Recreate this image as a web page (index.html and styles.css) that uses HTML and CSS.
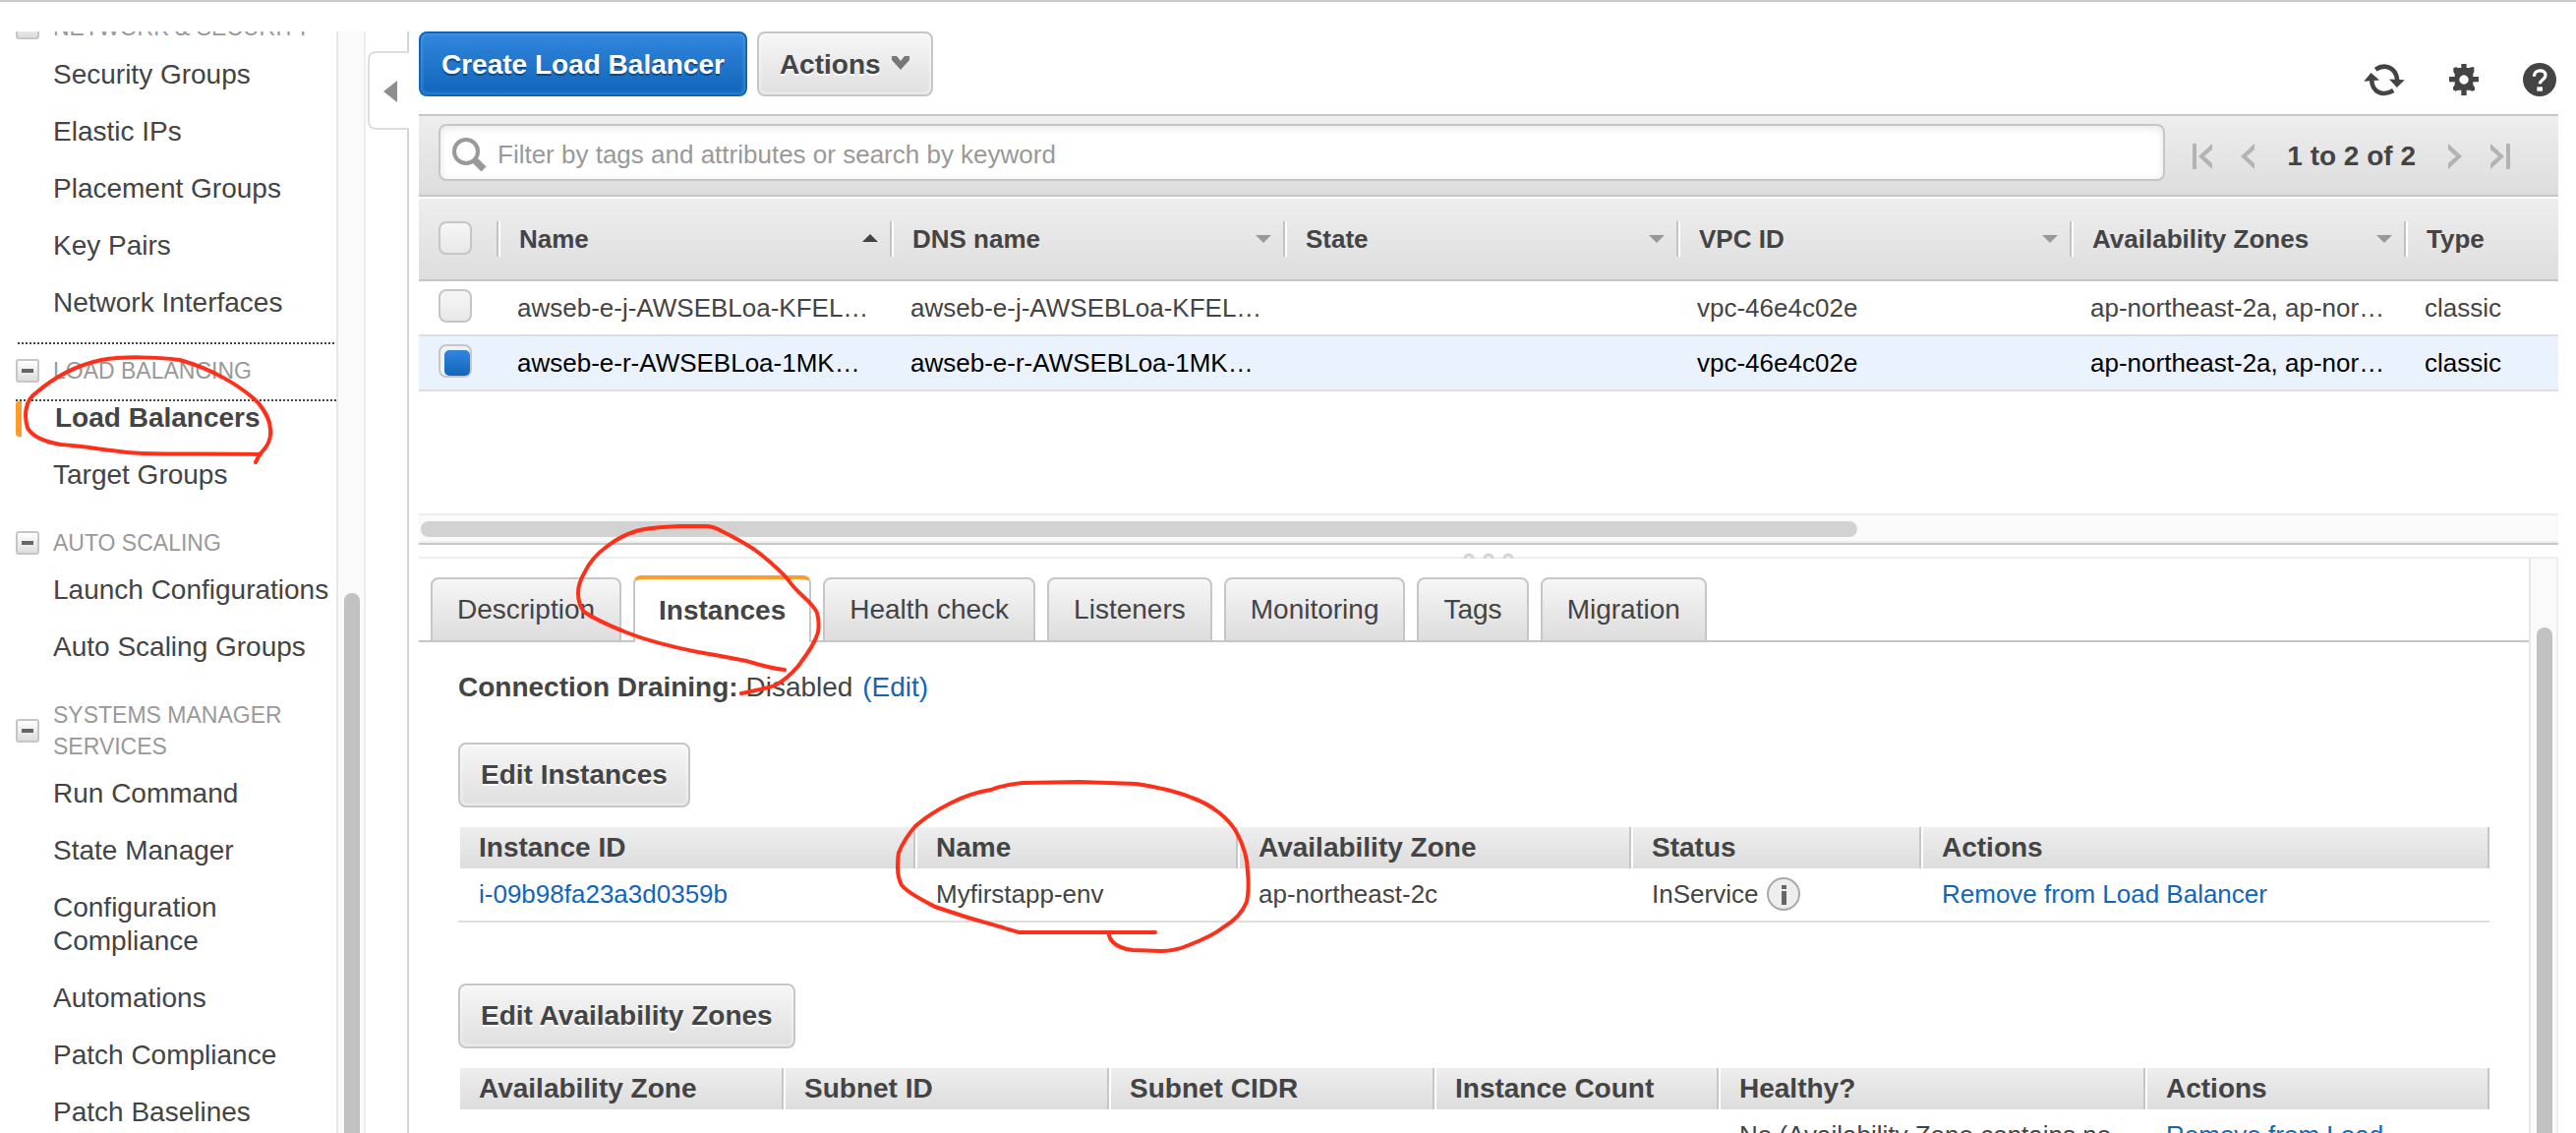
FILE: index.html
```html
<!DOCTYPE html>
<html lang="en">
<head>
<meta charset="utf-8">
<title>Load Balancers</title>
<link rel="stylesheet" href="styles.css">
</head>
<body>
<div class="app">
  <aside class="sidebar">
    <nav class="nav">
      <section class="group group-first">
        <h2 class="heading"><button class="fold" aria-label="Collapse"></button>NETWORK &amp; SECURITY</h2>
        <ul>
          <li><a href="#">Security Groups</a></li>
          <li><a href="#">Elastic IPs</a></li>
          <li><a href="#">Placement Groups</a></li>
          <li><a href="#">Key Pairs</a></li>
          <li><a href="#">Network Interfaces</a></li>
        </ul>
      </section>
      <section class="group group-open">
        <h2 class="heading"><button class="fold" aria-label="Collapse"></button>LOAD BALANCING</h2>
        <ul>
          <li class="current"><a href="#">Load Balancers</a></li>
          <li><a href="#">Target Groups</a></li>
        </ul>
      </section>
      <section class="group">
        <h2 class="heading"><button class="fold" aria-label="Collapse"></button>AUTO SCALING</h2>
        <ul>
          <li><a href="#">Launch Configurations</a></li>
          <li><a href="#">Auto Scaling Groups</a></li>
        </ul>
      </section>
      <section class="group">
        <h2 class="heading"><button class="fold" aria-label="Collapse"></button>SYSTEMS MANAGER SERVICES</h2>
        <ul>
          <li><a href="#">Run Command</a></li>
          <li><a href="#">State Manager</a></li>
          <li><a href="#">Configuration Compliance</a></li>
          <li><a href="#">Automations</a></li>
          <li><a href="#">Patch Compliance</a></li>
          <li><a href="#">Patch Baselines</a></li>
        </ul>
      </section>
    </nav>
    <div class="vscroll"><div class="vthumb nav-thumb"></div></div>
  </aside>

  <div class="gutter">
    <div class="gutter-top"></div>
    <button class="collapse" aria-label="Hide navigation"><svg width="14" height="22" viewBox="0 0 14 22"><path d="M14 0v22L0 11z" fill="#8e8e8e"/></svg></button>
    <div class="gutter-rest"></div>
  </div>

  <main class="main">
    <div class="toolbar">
      <button class="btn btn-primary">Create Load Balancer</button>
      <button class="btn">Actions <svg width="20" height="16" viewBox="0 0 20 16"><path d="M1 1h5l4 5 4-5h5v4l-9 10L1 5z" fill="#777"/></svg></button>
      <div class="tools">
        <button class="tool" aria-label="Refresh"><svg width="42" height="33" viewBox="40 50 126 100"><g fill="none" stroke="#444" stroke-width="14"><path d="M76 67C106 47 140 62 143 100"/><path d="M131 132C99 151 66 138 64 100"/></g><path d="M62 77L88 100 40 104zM118 97l48 2-24 24z" fill="#444"/></svg></button>
        <button class="tool" aria-label="Settings"><svg width="30" height="32" viewBox="300 42 90 96"><path fill="#444" fill-rule="evenodd" d="M337 42h16v12h10l3-2h10v14l-3 6v9h17v16h-17v9l5 8v8l-8 3-7-3h-10v16h-16v-16h-10l-7 3-8-4v-8l5-7v-9h-17V81h17v-9l-4-6V54l8-2 6 2h10zM345 76a14 14 0 1 0 .1 0z"/></svg></button>
        <button class="tool" aria-label="Help"><svg width="34" height="34" viewBox="528 41 102 102"><circle cx="579" cy="92" r="51" fill="#444"/><path d="M562 82c0-24 37-22 35-3-1 13-17 13-17 26" fill="none" stroke="#fff" stroke-width="10"/><path d="M571 114h17v13h-17z" fill="#fff"/></svg></button>
      </div>
    </div>

    <div class="filterbar">
      <div class="search">
        <svg class="lens" width="36" height="36" viewBox="0 0 36 36"><g fill="none" stroke="#999"><circle cx="14" cy="15" r="12" stroke-width="4"/><path d="M23 24l9 9" stroke-width="7"/></g></svg>
        <input type="text" aria-label="Filter" placeholder="Filter by tags and attributes or search by keyword">
      </div>
      <div class="pager">
        <button aria-label="First page"><svg width="20" height="26" viewBox="0 0 20 26" fill="#b3b3b3"><path d="M0 0h4v26H0zM20 0v6l-8 7 8 7v6L6 13z"/></svg></button>
        <button class="prev" aria-label="Previous page"><svg width="14" height="26" viewBox="0 0 14 26" fill="#b3b3b3"><path d="M14 0v6l-8 7 8 7v6L0 13z"/></svg></button>
        <span>1 to 2 of 2</span>
        <button class="next" aria-label="Next page"><svg width="14" height="26" viewBox="0 0 14 26" fill="#b3b3b3"><path d="M0 0v6l8 7-8 7v6l14-13z"/></svg></button>
        <button aria-label="Last page"><svg width="20" height="26" viewBox="0 0 20 26" fill="#b3b3b3"><path d="M16 0h4v26h-4zM0 0v6l8 7-8 7v6l14-13z"/></svg></button>
      </div>
    </div>

    <div class="list">
      <table class="balancers">
        <colgroup><col class="c-check"><col class="c-wide"><col class="c-wide"><col class="c-wide"><col class="c-wide"><col class="c-zones"><col></colgroup>
        <thead>
          <tr>
            <th class="check"><input type="checkbox" aria-label="Select all"></th>
            <th><div class="head">Name<svg class="up" width="16" height="8" viewBox="0 0 16 8"><path d="M8 0l8 8H0z" fill="#444"/></svg></div></th>
            <th><div class="head">DNS name<svg width="16" height="8" viewBox="0 0 16 8"><path d="M0 0h16L8 8z" fill="#999"/></svg></div></th>
            <th><div class="head">State<svg width="16" height="8" viewBox="0 0 16 8"><path d="M0 0h16L8 8z" fill="#999"/></svg></div></th>
            <th><div class="head">VPC ID<svg width="16" height="8" viewBox="0 0 16 8"><path d="M0 0h16L8 8z" fill="#999"/></svg></div></th>
            <th><div class="head">Availability Zones<svg width="16" height="8" viewBox="0 0 16 8"><path d="M0 0h16L8 8z" fill="#999"/></svg></div></th>
            <th><div class="head">Type</div></th>
          </tr>
        </thead>
        <tbody>
          <tr>
            <td class="check"><input type="checkbox" aria-label="Select row 1"></td>
            <td>awseb-e-j-AWSEBLoa-KFEL…</td><td>awseb-e-j-AWSEBLoa-KFEL…</td><td></td><td>vpc-46e4c02e</td><td>ap-northeast-2a, ap-nor…</td><td>classic</td>
          </tr>
          <tr class="selected">
            <td class="check"><input type="checkbox" aria-label="Select row 2" checked></td>
            <td>awseb-e-r-AWSEBLoa-1MK…</td><td>awseb-e-r-AWSEBLoa-1MK…</td><td></td><td>vpc-46e4c02e</td><td>ap-northeast-2a, ap-nor…</td><td>classic</td>
          </tr>
        </tbody>
      </table>
    </div>
    <div class="hscroll"><div class="hthumb"></div></div>
    <div class="splitter"><svg width="52" height="6" viewBox="0 0 52 6"><g fill="none" stroke="#d4d4d4" stroke-width="3"><circle cx="6" cy="6" r="4"/><circle cx="26" cy="6" r="4"/><circle cx="46" cy="6" r="4"/></g></svg></div>

    <div class="detail">
      <div class="pane">
        <div class="tabs" role="tablist">
          <button class="tab" role="tab">Description</button>
          <button class="tab tab-active" role="tab" aria-selected="true">Instances</button>
          <button class="tab" role="tab">Health check</button>
          <button class="tab" role="tab">Listeners</button>
          <button class="tab" role="tab">Monitoring</button>
          <button class="tab" role="tab">Tags</button>
          <button class="tab" role="tab">Migration</button>
        </div>
        <div class="content">
          <p class="draining"><strong>Connection Draining:</strong> Disabled <a href="#">(Edit)</a></p>
          <button class="btn">Edit Instances</button>
          <table class="grid">
            <colgroup><col class="i-id"><col class="i-name"><col class="i-zone"><col class="i-status"><col></colgroup>
            <thead><tr><th>Instance ID</th><th>Name</th><th>Availability Zone</th><th>Status</th><th>Actions</th></tr></thead>
            <tbody><tr>
              <td><a href="#">i-09b98fa23a3d0359b</a></td><td>Myfirstapp-env</td><td>ap-northeast-2c</td>
              <td><span class="status">InService <svg width="34" height="34" viewBox="0 0 34 34"><circle cx="17" cy="17" r="16" fill="#eee" stroke="#aaa" stroke-width="2"/><path d="M15 14h5v14h-5zM15 8h5v4h-5z" fill="#666"/></svg></span></td>
              <td><a href="#">Remove from Load Balancer</a></td>
            </tr></tbody>
          </table>
          <button class="btn btn-zones">Edit Availability Zones</button>
          <table class="grid">
            <colgroup><col class="z-wide"><col class="z-wide"><col class="z-wide"><col class="z-count"><col class="z-health"><col></colgroup>
            <thead><tr><th>Availability Zone</th><th>Subnet ID</th><th>Subnet CIDR</th><th>Instance Count</th><th>Healthy?</th><th>Actions</th></tr></thead>
            <tbody><tr><td></td><td></td><td></td><td></td><td>No (Availability Zone contains no</td><td><a href="#">Remove from Load</a></td></tr></tbody>
          </table>
        </div>
      </div>
      <div class="vscroll"><div class="vthumb detail-thumb"></div></div>
    </div>
  </main>
</div>

<!-- hand-drawn marks around the navigation item, the tab and the name column -->
<svg class="marks" width="2620" height="1152" viewBox="0 0 2620 1152" aria-hidden="true">
  <g fill="none" stroke="#ff2f1a" stroke-width="4" stroke-linecap="round" stroke-linejoin="round">
    <path d="M260 470L264 462C272 454 276 447 275 437C275 427 270 419 263 410C245 392 215 375 183 366C160 363 125 362 103 366C75 372 52 386 36 400C26 407 24 422 28 435C34 446 50 450 62 452C90 454 120 460 145 461C185 462 225 461 265 462"/>
    <path d="M754 705C768 702 780 700 788 697C798 692 806 684 812 677C820 666 828 656 832 643C833 636 833 630 831 623C825 610 812 605 802 590C794 580 784 572 773 563C760 553 746 546 734 540C729 537 723 535 717 535L691 535C675 536 660 536 647 540C634 544 626 549 618 555C607 563 599 572 594 583C590 590 588 597 588 603C588 611 590 617 594 622C607 631 622 637 637 643C660 652 685 658 710 663C728 666 744 669 759 672C772 676 785 680 798 681"/>
    <path d="M1175 948L1037 948C1030 946 1025 945 1020 943C997 937 974 930 951 922C936 914 924 908 917 900C914 894 913 889 913 883C913 877 913 872 914 867C918 857 924 848 931 840C941 831 954 823 968 816C980 810 995 805 1008 803C1018 799 1029 797 1040 796L1098 795L1156 797C1175 800 1195 804 1212 811C1232 818 1250 832 1258 847C1265 860 1269 873 1269 887C1270 897 1270 908 1268 917C1264 927 1256 936 1244 943C1234 951 1222 956 1209 961C1200 965 1191 967 1181 967L1152 966C1143 965 1136 962 1132 958C1129 955 1128 953 1128 950"/>
  </g>
</svg>
</body>
</html>
```
FILE: styles.css
```css
* { box-sizing: border-box; }

body {
  margin: 0;
  height: 100vh;
  overflow: hidden;
  position: relative;
  border-top: 2px solid #ccc;
  padding-top: 30px;
  background: #fff;
  color: #444;
  font-family: "Liberation Sans", Arial, sans-serif;
  font-size: 28px;
  line-height: 34px;
}

a { color: #1166bb; text-decoration: none; }
button { font: inherit; color: inherit; cursor: pointer; }
svg { display: block; flex: none; }
ul { list-style: none; margin: 0; padding: 0; }

.app { display: flex; height: 100%; }

/* sidebar */
.sidebar { display: flex; flex: none; width: 372px; overflow: hidden; }
.nav { flex: 1; min-width: 0; }
.heading {
  display: flex;
  align-items: center;
  gap: 14px;
  margin: 0 0 3px;
  padding: 24px 0 0 16px;
  color: #999;
  font-size: 23px;
  font-weight: normal;
  line-height: 32px;
}
.group-first { margin-top: -20px; }
.group-first .heading { padding-top: 0; }
.group-open .heading {
  margin: 11px 2px 0 18px;
  padding: 11px 0 0;
  gap: 12px;
  border-top: 2px dotted #444;
}
.fold {
  flex: none;
  display: flex;
  align-items: center;
  justify-content: center;
  width: 24px;
  height: 24px;
  padding: 0;
  border: 2px solid #c6c6c6;
  border-radius: 3px;
  background: linear-gradient(#fff, #ddd);
}
.group-open .fold { margin-left: -2px; margin-right: 2px; }
.fold::before { content: ""; width: 12px; height: 4px; background: #666; }
.nav li { padding: 12px 0 12px 54px; }
.nav a { display: block; color: #444; }
.nav .current {
  position: relative;
  margin: 13px 0 0 16px;
  padding: 0 0 12px 40px;
  border-top: 2px dotted #444;
  font-weight: bold;
}
.current::before {
  content: "";
  position: absolute;
  left: 0;
  top: 0;
  width: 6px;
  height: 36px;
  border-radius: 3px 0 0 3px;
  background: #ff9d2b;
}

.vscroll {
  flex: none;
  width: 30px;
  padding: 0 6px;
  border-left: 2px solid #e7e7e7;
  border-right: 2px solid #ededed;
  background: #fafafa;
  overflow: hidden;
}
.vthumb { width: 16px; height: 100%; border-radius: 8px; background: #c2c2c2; }
.nav-thumb { margin-top: 571px; }
.detail-thumb { margin-top: 70px; }

/* strip between sidebar and main */
.gutter { display: flex; flex-direction: column; flex: none; width: 44px; }
.gutter-top { height: 20px; border-right: 2px solid #d5d5d5; }
.collapse {
  display: flex;
  align-items: center;
  justify-content: flex-end;
  height: 80px;
  margin-left: 2px;
  padding: 2px 12px 0 0;
  border: 2px solid #ddd;
  border-right: 0;
  border-radius: 8px 0 0 8px;
  background: #fff;
}
.gutter-rest { flex: 1; border-right: 2px solid #d5d5d5; }

/* main */
.main { display: flex; flex-direction: column; flex: 1; min-width: 0; margin: 0 18px 0 10px; }
.toolbar { display: flex; gap: 10px; flex: none; padding-bottom: 18px; }
.btn {
  display: inline-flex;
  align-items: center;
  gap: 10px;
  height: 66px;
  padding: 0 21px;
  border: 2px solid #c6c6c6;
  border-radius: 8px;
  background: linear-gradient(#f6f6f6, #dfdfdf);
  box-shadow: inset 0 0 4px #fff;
  font-weight: bold;
  text-shadow: 0 2px 0 #fff;
}
.toolbar .btn { padding-top: 2px; }
.btn svg { margin-bottom: 4px; }
.btn-primary {
  border-color: #1166bb;
  background: linear-gradient(#3186dd, #1166bb);
  box-shadow: inset 0 0 4px #5ca3ea;
  color: #fff;
  text-shadow: 0 2px 1px #0a4a8c;
}
.tools { display: flex; align-items: center; gap: 45px; margin-left: auto; padding: 32px 2px 0 0; }
.tool { padding: 0; border: 0; background: none; }

.filterbar {
  display: flex;
  flex: none;
  gap: 28px;
  padding: 8px 49px 14px 20px;
  border: solid #c6c6c6;
  border-width: 2px 0;
  background: linear-gradient(#eee, #ddd);
}
.search {
  display: flex;
  align-items: center;
  flex: 1;
  height: 58px;
  padding: 4px 12px 0;
  gap: 10px;
  border: 2px solid #c6c6c6;
  border-radius: 8px;
  background: #fff;
  box-shadow: inset 0 2px 8px #e6e6e6;
}
.search input {
  flex: 1;
  min-width: 0;
  padding: 0;
  border: 0;
  outline: 0;
  background: none;
  color: #444;
  font: inherit;
  font-size: 26px;
}
.search input::placeholder { color: #999; opacity: 1; }
.pager { display: flex; align-items: center; gap: 29px; padding-top: 8px; font-weight: bold; }
.pager button { padding: 0; border: 0; background: none; }
.pager .prev { margin-right: 4px; }
.pager .next { margin-left: 4px; }

.list { flex: none; min-height: 322px; padding-top: 2px; font-size: 26px; }
table { width: 100%; table-layout: fixed; border-collapse: separate; border-spacing: 0; }
th { text-align: left; }
td, th { padding: 0; }
.balancers thead { background: linear-gradient(#eee, #ddd); }
.balancers th { height: 84px; border-bottom: 2px solid #c6c6c6; }
.balancers td { height: 56px; padding: 0 0 0 21px; border-bottom: 2px solid #dedede; white-space: nowrap; }
.selected { background: #eaf2fe; color: #000; }
.head {
  display: flex;
  align-items: center;
  justify-content: space-between;
  height: 36px;
  padding: 0 12px 0 21px;
  border-left: 2px solid #c2c2c2;
  box-shadow: inset 2px 0 #fff;
}
.head .up { margin-bottom: 2px; }
.balancers .check { padding: 0 0 0 20px; }
.balancers th.check { padding-bottom: 3px; }
.balancers td.check { padding-top: 8px; vertical-align: top; }
.check input {
  appearance: none;
  display: block;
  width: 34px;
  height: 34px;
  margin: 0;
  border: 2px solid #c6c6c6;
  border-radius: 8px;
  background: linear-gradient(#f6f6f6, #e8e8e8);
}
.check input:checked {
  display: flex;
  padding: 4px 0 0 4px;
  background: #f2f2f2;
}
.check input:checked::before {
  content: "";
  flex: 1;
  border-radius: 5px;
  background: linear-gradient(#3186dd, #1166bb);
}
.c-check { width: 79px; }
.c-wide { width: 400px; }
.c-zones { width: 340px; }

.hscroll {
  flex: none;
  height: 32px;
  padding: 6px 2px;
  border-top: 2px solid #ececec;
  border-bottom: 2px solid #c8c8c8;
  background: #fafafa;
  box-shadow: inset 0 -2px #eee;
}
.hthumb { width: calc(67% + 6px); height: 16px; border-radius: 8px; background: #d2d2d2; }
.splitter {
  display: flex;
  flex: none;
  align-items: flex-end;
  justify-content: center;
  height: 14px;
  border-bottom: 2px solid #eee;
}
.splitter svg { margin-bottom: -2px; }

/* detail pane */
.detail { display: flex; flex: 1; min-height: 0; overflow: hidden; }
.pane { flex: 1; min-width: 0; }
.tabs {
  display: flex;
  align-items: flex-end;
  gap: 12px;
  padding: 17px 12px 0;
  box-shadow: inset 0 -2px #c6c6c6;
}
.tab {
  height: 66px;
  padding: 0 25px;
  border: 2px solid #c6c6c6;
  border-radius: 8px 8px 0 0;
  background: linear-gradient(#f6f6f6, #ddd);
}
.tab-active {
  height: 68px;
  padding: 0 24px;
  border-top: 4px solid #ff9d2b;
  border-bottom: 0;
  background: #fff;
  font-weight: bold;
}
.content { padding: 29px 40px 0; }
.draining { margin: 0 0 39px; }
.draining a { margin-left: 2px; }
.btn-zones { margin-top: 62px; }
.grid { margin-top: 20px; }
.grid th {
  height: 42px;
  padding-left: 19px;
  border-left: 2px solid #fff;
  border-right: 2px solid #c6c6c6;
  background: linear-gradient(#eee, #ddd);
  background-clip: padding-box;
}
.grid td {
  height: 55px;
  padding: 10px 0 11px 21px;
  border-bottom: 2px solid #dedede;
  font-size: 26px;
  line-height: 32px;
  white-space: nowrap;
}
.status { display: flex; align-items: center; gap: 9px; height: 32px; }
.i-id { width: 465px; }
.i-name { width: 328px; }
.i-zone { width: 400px; }
.i-status { width: 295px; }
.z-wide { width: 331px; }
.z-count { width: 289px; }
.z-health { width: 434px; }

.marks { position: absolute; left: 0; top: -2px; pointer-events: none; }
```
